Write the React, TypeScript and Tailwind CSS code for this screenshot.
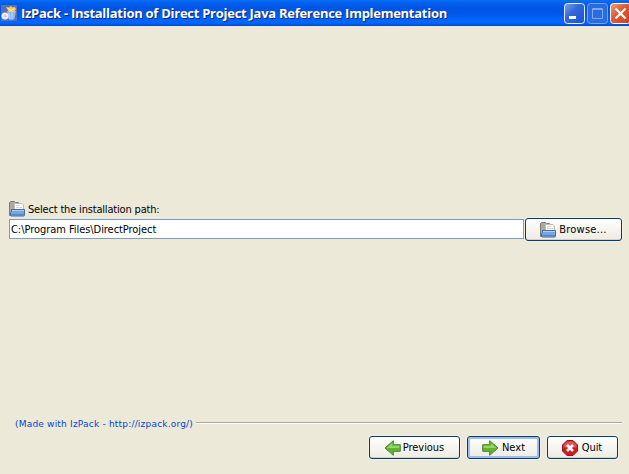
import type { ReactNode } from "react";

function FolderIcon() {
  return (
    <svg width="16" height="16" viewBox="0 0 16 16" className="shrink-0">
      <path d="M.5 14.500V1.500L1.500.5h4l1 1h3v13z" fill="#aaa9a3" stroke="#7c7c77" />
      <path d="M5.500 2.500h7.500l1.500 1.500v6h-9z" fill="#fbfbf8" stroke="#bdbcb6" />
      <path d="M7 4.500h4M7 6.500h6" stroke="#d6d6d1" />
      <path d="M2.500 8.500h13v5.500q0 1-1 1h-12q-1 0-1-1v-2.500l1-1z" fill="#79a5dd" stroke="#3c6cab" />
      <path d="M3 9.500h12" stroke="#b3cff0" />
      <path d="M2.500 13.500h12.500" stroke="#5685c6" />
    </svg>
  );
}

function ArrowIcon({ flip = false }: { flip?: boolean }) {
  return (
    <svg width="17" height="16" viewBox="0 0 17 16" className={flip ? "shrink-0 -scale-x-100" : "shrink-0"}>
      <path d="M.7 4.700h7V.7L16 8l-8.300 7.300v-4h-7z" fill="#62b52d" stroke="#47852a" strokeLinejoin="round" />
      <path d="M1.700 8V5.700h7V3L14.300 8z" fill="#98d568" />
    </svg>
  );
}

function StopIcon() {
  return (
    <svg width="16" height="16" viewBox="0 0 16 16" className="shrink-0">
      <path d="M5 .5h6L15.500 5v6L11 15.500H5L.5 11V5z" fill="#cc1b22" stroke="#a11319" />
      <path d="M5.300 1.500h5.400l3.800 3.800v2.200h-13V5.300z" fill="#df5559" />
      <path d="M5 5l6 6M11 5l-6 6" stroke="#fff" strokeWidth="2.600" />
    </svg>
  );
}

function AppIcon() {
  return (
    <svg width="16" height="16" viewBox="0 0 16 16" className="shrink-0">
      <path d="M0 0h16v16H0z" fill="#5570b4" />
      <path d="M6 6h9l-1.500 8q-3 2-6 0z" fill="#8fb4f0" />
      <path d="M8 8l.5 6M11 7v7" stroke="#bfd8fb" />
      <path d="M5 2l3 .5L10 1l1.500 1.500L14 2l1 2.500L13 7H8z" fill="#ffc95e" />
      <path d="M7 3.500l3 2 3-2" stroke="#fff0a2" fill="none" />
      <circle cx="4" cy="11" r="3.500" fill="#e9f0ff" />
      <path d="M4 9.500v2h1.500" stroke="#9db9ea" fill="none" />
    </svg>
  );
}

function Button({ children, size, active = false }: { children: ReactNode; size: string; active?: boolean }) {
  return (
    <button
      className={`${size} flex h-[23px] shrink-0 items-center justify-center rounded-[3px] border border-[#003c74] bg-linear-to-b from-white via-[#f5f4ef] to-[#eeece2] ${active ? "shadow-[inset_0_0_0_2px_#9ebcf0,0_0_0_1px_#f3f1e6]" : "shadow-[inset_0_-1px_0_#d6d0c5,0_0_0_1px_#f3f1e6]"}`}
    >
      {children}
    </button>
  );
}

export default function App() {
  return (
    <div className="flex h-[474px] w-[629px] flex-col overflow-hidden bg-[#ece9d8] font-['DejaVu_Sans_Condensed','DejaVu_Sans',sans-serif] text-[11px] leading-[14px] text-black">
      <header className="flex h-[26px] shrink-0 items-center bg-[linear-gradient(#0871f4_0px,#0260ee_3px,#0054e3_8px,#0058e9_14px,#0066ff_20px,#0066fc_23px,#0047cd_26px)] pl-px">
        <AppIcon />
        <h1 className="ml-[4px] w-[543px] shrink-0 whitespace-nowrap font-['Open_Sans',sans-serif] text-[13px] font-bold leading-5 tracking-[-0.27px] text-white [text-shadow:1px_1px_0_#0c2574]">
          IzPack - Installation of Direct Project Java Reference Implementation
        </h1>
        <div className="flex shrink-0 gap-[2px]">
          <svg width="21" height="21" viewBox="0 0 21 21">
            <defs>
              <linearGradient id="min" x2="1" y2="1"><stop stopColor="#82a6ef" /><stop offset=".4" stopColor="#3469d9" /><stop offset="1" stopColor="#1650d2" /></linearGradient>
            </defs>
            <rect x=".5" y=".5" width="20" height="20" rx="3" fill="url(#min)" stroke="#e6edff" />
            <path d="M5 13h7v3H5z" fill="#fff" />
          </svg>
          <svg width="21" height="21" viewBox="0 0 21 21">
            <rect x=".5" y=".5" width="20" height="20" rx="3" fill="#286be3" stroke="#7aa4f0" />
            <path d="M5.500 5.500h10v10h-10zM5 6.500h11" fill="none" stroke="#81a8ee" />
          </svg>
          <svg width="21" height="21" viewBox="0 0 21 21">
            <defs>
              <linearGradient id="close" x2="1" y2="1"><stop stopColor="#f1a287" /><stop offset=".4" stopColor="#e35d36" /><stop offset="1" stopColor="#ce3d17" /></linearGradient>
            </defs>
            <rect x=".5" y=".5" width="20" height="20" rx="3" fill="url(#close)" stroke="#fff" />
            <path d="M5.500 5.500l10 10M15.500 5.500l-10 10" stroke="#fff" strokeWidth="2.200" />
          </svg>
        </div>
      </header>

      <main className="flex flex-1 flex-col pt-[175px]">
        <label className="flex h-4 items-center gap-[3px] pl-[9px]">
          <FolderIcon />
          <span className="whitespace-nowrap pt-px tracking-[-0.18px]">Select the installation path:</span>
        </label>
        <div className="mt-px flex h-[23px] items-start gap-px pl-[9px]">
          <div className="mt-px flex h-5 w-[515px] items-center border border-[#7f9db9] bg-white pl-px">
            <span className="whitespace-nowrap pt-[2px] tracking-[-0.05px]">C:\Program Files\DirectProject</span>
          </div>
          <Button size="w-[97px] gap-[3px]">
            <FolderIcon />
            <span className="tracking-[0.22px]">Browse...</span>
          </Button>
        </div>
      </main>

      <footer className="h-[57px] shrink-0">
        <div className="flex h-3 items-center pl-[15px] pr-[7px]">
          <span className="w-[178px] whitespace-nowrap pt-[2px] font-['DejaVu_Sans',sans-serif] text-[9px] leading-3 tracking-[0.2px] text-[#0046d5]">
            (Made with IzPack - http://izpack.org/)
          </span>
          <div className="ml-[3px] h-[2px] flex-1 border-t border-[#aca899] bg-white" />
        </div>
        <div className="mt-[7px] flex gap-[7px] pl-[369px]">
          <Button size="w-[91px] gap-[2px] pr-px">
            <ArrowIcon flip />
            <span className="tracking-[-0.05px]">Previous</span>
          </Button>
          <Button size="w-[73px] gap-[3px]" active>
            <ArrowIcon />
            <span className="tracking-[0.05px]">Next</span>
          </Button>
          <Button size="w-[71px] gap-[4px] pr-px">
            <StopIcon />
            <span className="tracking-[-0.1px]">Quit</span>
          </Button>
        </div>
      </footer>
    </div>
  );
}
